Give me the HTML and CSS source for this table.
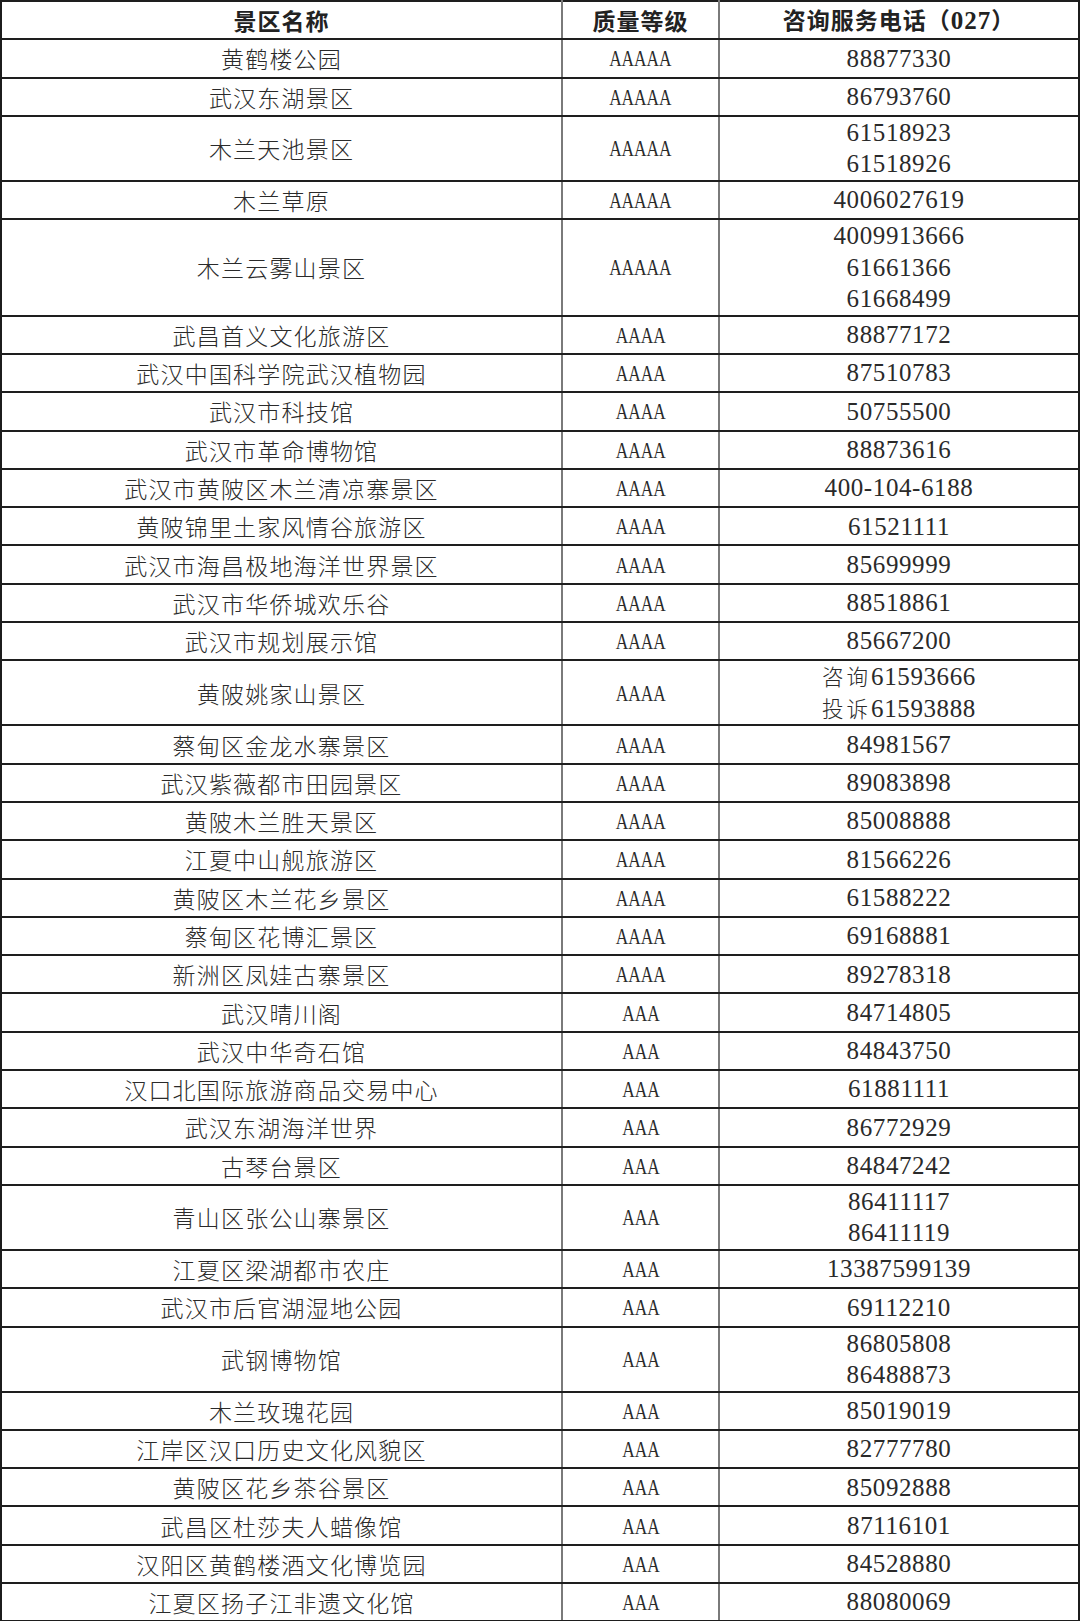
FILE: index.html
```html
<!DOCTYPE html>
<html lang="zh-CN">
<head>
<meta charset="utf-8">
<title>武汉景区咨询服务电话</title>
<link rel="stylesheet" href="styles.css">
</head>
<body>
<table class="scenic">
  <colgroup>
    <col class="c-name">
    <col class="c-grade">
    <col class="c-tel">
  </colgroup>
  <thead>
    <tr><th>景区名称</th><th>质量等级</th><th>咨询服务电话（<span class="hnum">027</span>）</th></tr>
  </thead>
  <tbody>
    <tr><td class="name">黄鹤楼公园</td><td class="grade"><span>AAAAA</span></td><td class="tel">88877330</td></tr>
    <tr><td class="name">武汉东湖景区</td><td class="grade"><span>AAAAA</span></td><td class="tel">86793760</td></tr>
    <tr><td class="name">木兰天池景区</td><td class="grade"><span>AAAAA</span></td><td class="tel">61518923<br>61518926</td></tr>
    <tr><td class="name">木兰草原</td><td class="grade"><span>AAAAA</span></td><td class="tel">4006027619</td></tr>
    <tr><td class="name">木兰云雾山景区</td><td class="grade"><span>AAAAA</span></td><td class="tel">4009913666<br>61661366<br>61668499</td></tr>
    <tr><td class="name">武昌首义文化旅游区</td><td class="grade"><span>AAAA</span></td><td class="tel">88877172</td></tr>
    <tr><td class="name">武汉中国科学院武汉植物园</td><td class="grade"><span>AAAA</span></td><td class="tel">87510783</td></tr>
    <tr><td class="name">武汉市科技馆</td><td class="grade"><span>AAAA</span></td><td class="tel">50755500</td></tr>
    <tr><td class="name">武汉市革命博物馆</td><td class="grade"><span>AAAA</span></td><td class="tel">88873616</td></tr>
    <tr><td class="name">武汉市黄陂区木兰清凉寨景区</td><td class="grade"><span>AAAA</span></td><td class="tel">400-104-6188</td></tr>
    <tr><td class="name">黄陂锦里土家风情谷旅游区</td><td class="grade"><span>AAAA</span></td><td class="tel">61521111</td></tr>
    <tr><td class="name">武汉市海昌极地海洋世界景区</td><td class="grade"><span>AAAA</span></td><td class="tel">85699999</td></tr>
    <tr><td class="name">武汉市华侨城欢乐谷</td><td class="grade"><span>AAAA</span></td><td class="tel">88518861</td></tr>
    <tr><td class="name">武汉市规划展示馆</td><td class="grade"><span>AAAA</span></td><td class="tel">85667200</td></tr>
    <tr><td class="name">黄陂姚家山景区</td><td class="grade"><span>AAAA</span></td><td class="tel"><span class="cjk">咨询</span>61593666<br><span class="cjk">投诉</span>61593888</td></tr>
    <tr><td class="name">蔡甸区金龙水寨景区</td><td class="grade"><span>AAAA</span></td><td class="tel">84981567</td></tr>
    <tr><td class="name">武汉紫薇都市田园景区</td><td class="grade"><span>AAAA</span></td><td class="tel">89083898</td></tr>
    <tr><td class="name">黄陂木兰胜天景区</td><td class="grade"><span>AAAA</span></td><td class="tel">85008888</td></tr>
    <tr><td class="name">江夏中山舰旅游区</td><td class="grade"><span>AAAA</span></td><td class="tel">81566226</td></tr>
    <tr><td class="name">黄陂区木兰花乡景区</td><td class="grade"><span>AAAA</span></td><td class="tel">61588222</td></tr>
    <tr><td class="name">蔡甸区花博汇景区</td><td class="grade"><span>AAAA</span></td><td class="tel">69168881</td></tr>
    <tr><td class="name">新洲区凤娃古寨景区</td><td class="grade"><span>AAAA</span></td><td class="tel">89278318</td></tr>
    <tr><td class="name">武汉晴川阁</td><td class="grade"><span>AAA</span></td><td class="tel">84714805</td></tr>
    <tr><td class="name">武汉中华奇石馆</td><td class="grade"><span>AAA</span></td><td class="tel">84843750</td></tr>
    <tr><td class="name">汉口北国际旅游商品交易中心</td><td class="grade"><span>AAA</span></td><td class="tel">61881111</td></tr>
    <tr><td class="name">武汉东湖海洋世界</td><td class="grade"><span>AAA</span></td><td class="tel">86772929</td></tr>
    <tr><td class="name">古琴台景区</td><td class="grade"><span>AAA</span></td><td class="tel">84847242</td></tr>
    <tr><td class="name">青山区张公山寨景区</td><td class="grade"><span>AAA</span></td><td class="tel">86411117<br>86411119</td></tr>
    <tr><td class="name">江夏区梁湖都市农庄</td><td class="grade"><span>AAA</span></td><td class="tel">13387599139</td></tr>
    <tr><td class="name">武汉市后官湖湿地公园</td><td class="grade"><span>AAA</span></td><td class="tel">69112210</td></tr>
    <tr><td class="name">武钢博物馆</td><td class="grade"><span>AAA</span></td><td class="tel">86805808<br>86488873</td></tr>
    <tr><td class="name">木兰玫瑰花园</td><td class="grade"><span>AAA</span></td><td class="tel">85019019</td></tr>
    <tr><td class="name">江岸区汉口历史文化风貌区</td><td class="grade"><span>AAA</span></td><td class="tel">82777780</td></tr>
    <tr><td class="name">黄陂区花乡茶谷景区</td><td class="grade"><span>AAA</span></td><td class="tel">85092888</td></tr>
    <tr><td class="name">武昌区杜莎夫人蜡像馆</td><td class="grade"><span>AAA</span></td><td class="tel">87116101</td></tr>
    <tr><td class="name">汉阳区黄鹤楼酒文化博览园</td><td class="grade"><span>AAA</span></td><td class="tel">84528880</td></tr>
    <tr><td class="name">江夏区扬子江非遗文化馆</td><td class="grade"><span>AAA</span></td><td class="tel">88080069</td></tr>
  </tbody>
</table>
</body>
</html>
```
FILE: styles.css
```css
html, body {
  margin: 0;
  padding: 0;
  background: #ffffff;
}

body {
  color: #2a2a2a;
  font-family: "Liberation Serif", "Noto Sans CJK SC", serif;
}

.scenic {
  width: 1078px;
  border-collapse: collapse;
  table-layout: fixed;
  border: 2px solid #1c1c1c;
  border-bottom-color: #3a3a3a;
}

.c-name { width: 561px; }
.c-grade { width: 157px; }
.c-tel { width: 360px; }

.scenic th,
.scenic td {
  padding: 0;
  text-align: center;
  vertical-align: middle;
  border-top: 2px solid #1e1e1e;
  border-bottom: 2px solid #1e1e1e;
  border-left: 2px solid #7a7a7a;
  border-right: 2px solid #7a7a7a;
}

.scenic th:first-child,
.scenic td:first-child { border-left: 2px solid #1c1c1c; }
.scenic th:last-child,
.scenic td:last-child { border-right: 2px solid #1c1c1c; }

.scenic tr { height: 38.3px; }

.scenic th {
  font-family: "Noto Sans CJK SC", sans-serif;
  font-weight: 700;
  font-size: 23px;
  letter-spacing: 1px;
  line-height: 32px;
  color: #222;
}

.scenic th .hnum {
  font-family: "Liberation Serif", serif;
  font-weight: 700;
  font-size: 25px;
}

.name {
  font-family: "Noto Sans CJK SC", sans-serif;
  font-size: 23px;
  letter-spacing: 1.2px;
  line-height: 32px;
  font-weight: 300;
}

.grade span {
  display: inline-block;
  font-family: "Liberation Serif", serif;
  font-size: 24px;
  line-height: 32px;
  transform: scaleX(0.72);
}

.tel {
  font-family: "Liberation Serif", "Noto Sans CJK SC", serif;
  font-size: 25px;
  letter-spacing: 0.6px;
  line-height: 31.5px;
}

.tel .cjk {
  font-family: "Noto Sans CJK SC", sans-serif;
  font-weight: 300;
  font-size: 21.5px;
  line-height: 22px;
  letter-spacing: 3px;
}
```
